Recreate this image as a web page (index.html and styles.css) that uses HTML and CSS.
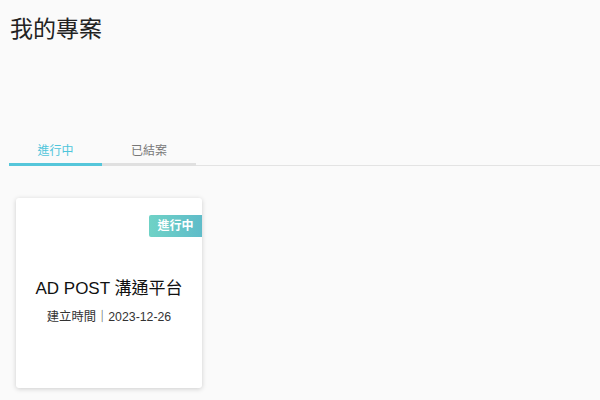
FILE: index.html
```html
<!DOCTYPE html>
<html lang="zh-Hant">
<head>
<meta charset="utf-8">
<link rel="stylesheet" href="styles.css">
</head>
<body>
<div class="page">
  <h1 class="title">我的專案</h1>
  <div class="tabs">
    <div class="tab active">進行中</div>
    <div class="tab">已結案</div>
  </div>
  <div class="cards">
    <div class="card">
      <span class="badge">進行中</span>
      <div class="card-name">AD POST 溝通平台</div>
      <div class="card-date">建立時間｜2023-12-26</div>
    </div>
  </div>
</div>
</body>
</html>
```
FILE: styles.css
```css
html, body {
  margin: 0;
  padding: 0;
  background: #fafafa;
  font-family: "Liberation Sans", "Noto Sans CJK TC", sans-serif;
  color: #222;
}
.page {
  width: 600px;
  height: 400px;
  overflow: hidden;
}
.title {
  margin: 0;
  padding: 13px 0 0 10px;
  font-size: 23px;
  font-weight: 400;
  line-height: 32px;
  color: #222;
}
.tabs {
  display: flex;
  margin-top: 91px;
  margin-left: 9px;
  border-bottom: 1px solid #e3e3e3;
}
.tab {
  width: 94px;
  text-align: center;
  font-size: 12px;
  line-height: 16px;
  padding: 7px 0 4px;
  color: #777;
  border-bottom: 3px solid #e0e0e0;
  margin-bottom: -1px;
}
.tab.active {
  width: 93px;
  color: #4ec5da;
  border-bottom-color: #55c6da;
}
.cards {
  display: flex;
  padding: 32px 0 0 16px;
}
.card {
  position: relative;
  width: 186px;
  height: 190px;
  background: #fff;
  border-radius: 3px;
  box-shadow: 0 1px 5px rgba(0, 0, 0, 0.18);
  display: flex;
  flex-direction: column;
  align-items: center;
  justify-content: center;
  padding-top: 14px;
  box-sizing: border-box;
}
.badge {
  position: absolute;
  top: 17px;
  right: 0;
  width: 53px;
  height: 22px;
  line-height: 22px;
  text-align: center;
  color: #fff;
  font-size: 12px;
  font-weight: 700;
  background: linear-gradient(90deg, #6fd2c6, #5fbcc9);
  border-radius: 2px 0 0 2px;
}
.card-name {
  font-size: 17px;
  line-height: 26px;
  color: #111;
}
.card-date {
  margin-top: 7px;
  font-size: 12.3px;
  line-height: 16px;
  color: #333;
}
```
